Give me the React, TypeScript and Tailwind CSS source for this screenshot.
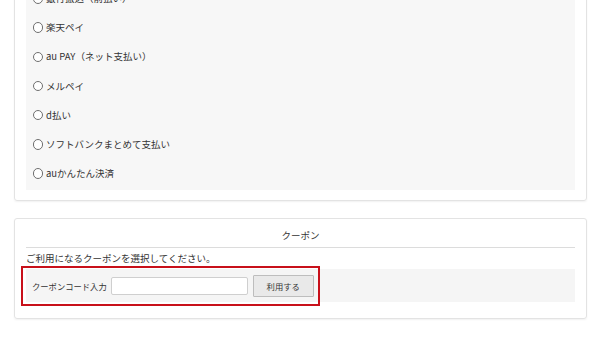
import React from 'react';

const methods = [
  '銀行振込（前払い）',
  '楽天ペイ',
  'au PAY（ネット支払い）',
  'メルペイ',
  'd払い',
  'ソフトバンクまとめて支払い',
  'auかんたん決済',
];

const Radio = ({ label }: { label: string }) => (
  <label className="flex h-[29.16px] items-center pl-[6.5px]">
    <span className="box-border h-[10.5px] w-[10.5px] shrink-0 rounded-full border border-[#6f6f6f] bg-white" />
    <span className="ml-[3px] text-[9.5px] leading-[13px] text-[#333]">{label}</span>
  </label>
);

export default function App() {
  return (
    <div
      className="h-[343px] w-[604px] overflow-hidden bg-white"
      style={{ fontFamily: '"Noto Sans CJK JP", "Noto Sans", sans-serif' }}
    >
      <div className="ml-[14px] w-[573px]">
        {/* 支払い方法 */}
        <div className="-mt-[17px] rounded-[3px] border border-[#e3e3e3] px-[11px] pb-[10px] shadow-[0_1px_2px_rgba(0,0,0,0.06)]">
          <div className="bg-[#f7f7f7] pb-[2px]">
            {methods.map((m) => (
              <Radio key={m} label={m} />
            ))}
          </div>
        </div>

        {/* クーポン */}
        <div className="mt-[17px] rounded-[3px] border border-[#e3e3e3] px-[11px] pb-[16px] shadow-[0_1px_2px_rgba(0,0,0,0.06)]">
          <div className="border-b border-[#dcdcdc] pt-[10px] pb-[5px] text-center text-[9.5px] leading-[13px] text-[#333]">
            クーポン
          </div>
          <p className="mt-[3.5px] text-[9.5px] leading-[13px] text-[#333]">
            ご利用になるクーポンを選択してください。
          </p>
          <div className="relative mt-[4.5px] flex h-[33px] items-center bg-[#f5f5f5] pl-[6px]">
            <span className="text-[8.3px] leading-[12px] text-[#333]">クーポンコード入力</span>
            <input
              type="text"
              className="ml-[4px] box-border h-[18px] w-[137px] rounded-[2px] border border-[#cfcfcf] bg-white outline-none"
            />
            <button className="ml-[5px] box-border h-[22px] w-[61px] rounded-[1px] border border-[#bdbdbd] bg-[#e9e9e9] text-[8.3px] leading-[12px] text-[#333]">
              利用する
            </button>
            <div className="pointer-events-none absolute -left-[5px] -top-[3px] box-border h-[40px] w-[299px] border-2 border-[#c8101a]" />
          </div>
        </div>
      </div>
    </div>
  );
}
